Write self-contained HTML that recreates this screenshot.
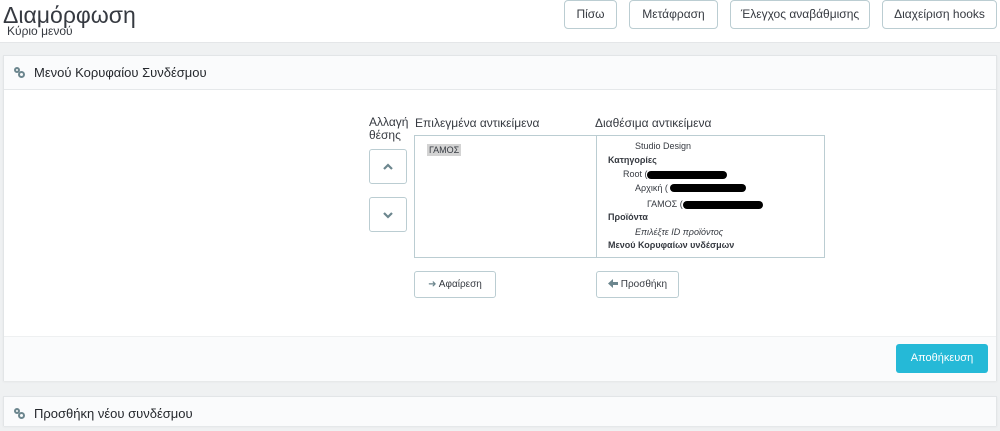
<!DOCTYPE html>
<html><head><meta charset="utf-8"><style>
*{box-sizing:border-box;margin:0;padding:0}
body{width:1000px;height:414px;overflow:hidden;background:#eff1f2;font-family:"Liberation Sans","DejaVu Sans",sans-serif;color:#363a41;position:relative}
.hdr{position:absolute;left:0;top:0;width:1000px;height:43px;background:#fff;border-bottom:1px solid #e4e6e8}
.t{position:absolute;left:3px;top:2px;font-size:23px;color:#363a41}
.st{position:absolute;left:7px;top:24px;font-size:12px;color:#363a41}
.b{position:absolute;top:0;height:29px;border:1px solid #bbcdd2;border-radius:4px;background:#fff;font-size:12px;color:#363a41;text-align:center;line-height:27px}
.panel{position:absolute;left:3px;width:994px;background:#fff;border:1px solid #e2e5e7;box-shadow:0 1px 2px rgba(0,0,0,.05)}
.ph{height:34px;background:#fafbfc;border-bottom:1px solid #e5e8ea;font-size:13px;line-height:34px;padding-left:30px;position:relative;color:#25282d}
.ico{position:absolute;left:10px;top:11px;width:6px;height:6px;border:2px solid #6c868e;border-radius:50%}
.ico2{position:absolute;left:14px;top:15px;width:7px;height:7px;border:2px solid #6c868e;border-radius:50%}
.lbl{position:absolute;font-size:12px;color:#363a41}
.box{position:absolute;border:1px solid #bbcdd2;background:#fff}
.sb{position:absolute;border:1px solid #bbcdd2;border-radius:3px;background:#fff;font-size:10px;text-align:center;color:#6c868e}
.sb svg{position:absolute;left:13px;top:13px}
.it{position:absolute;font-size:9px;color:#363a41;white-space:nowrap}
.bl{font-weight:bold}
.red{position:absolute;height:8px;background:#000;border-radius:4px}
</style></head><body>
<div class="hdr">
<div class="t">Διαμόρφωση</div>
<div class="st">Κύριο μενού</div>
<div class="b" style="left:564px;width:53px">Πίσω</div>
<div class="b" style="left:629px;width:89px">Μετάφραση</div>
<div class="b" style="left:730px;width:140px">Έλεγχος αναβάθμισης</div>
<div class="b" style="left:882px;width:115px">Διαχείριση hooks</div>
</div>
<div class="panel" style="top:55px;height:326px">
<div class="ph"><span class="ico"></span><span class="ico2"></span>Μενού Κορυφαίου Συνδέσμου</div>
<div style="position:absolute;left:0;top:280px;width:992px;height:45px;background:#fafbfc;border-top:1px solid #eef0f1"></div>
<div style="position:absolute;left:892px;top:288px;width:92px;height:29px;background:#25b9d7;border-radius:3px;color:#fff;font-size:11px;text-align:center;line-height:29px">Αποθήκευση</div>
</div>
<div class="lbl" style="left:369px;top:116px;line-height:13px">Αλλαγή<br>θέσης</div>
<div class="lbl" style="left:415px;top:116px">Επιλεγμένα αντικείμενα</div>
<div class="lbl" style="left:595px;top:116px">Διαθέσιμα αντικείμενα</div>
<div class="sb" style="left:369px;top:149px;width:38px;height:35px"><svg width="10" height="8" viewBox="0 0 10 8"><path d="M1 6 L5 2 L9 6" stroke="#6c868e" stroke-width="2.2" fill="none"/></svg></div>
<div class="sb" style="left:369px;top:197px;width:38px;height:35px"><svg width="10" height="8" viewBox="0 0 10 8"><path d="M1 2 L5 6 L9 2" stroke="#6c868e" stroke-width="2.2" fill="none"/></svg></div>
<div class="box" style="left:414px;top:135px;width:183px;height:123px"></div>
<div class="box" style="left:596px;top:135px;width:229px;height:123px"></div>
<div class="it" style="left:427px;top:144px;background:#d3d3d3;padding:1px 2px">ΓΑΜΟΣ</div>
<div class="it" style="left:635px;top:141px">Studio Design</div>
<div class="it bl" style="left:608px;top:155px">Κατηγορίες</div>
<div class="it" style="left:623px;top:169px">Root (</div><div class="red" style="left:647px;top:171px;width:80px"></div>
<div class="it" style="left:635px;top:183px">Αρχική (</div><div class="red" style="left:670px;top:184px;width:76px"></div>
<div class="it" style="left:647px;top:199px">ΓΑΜΟΣ (</div><div class="red" style="left:683px;top:201px;width:80px"></div>
<div class="it bl" style="left:608px;top:212px">Προϊόντα</div>
<div class="it" style="left:635px;top:227px;font-style:italic">Επιλέξτε ID προϊόντος</div>
<div class="it bl" style="left:608px;top:240px">Μενού Κορυφαίων υνδέσμων</div>
<div class="sb" style="left:414px;top:271px;width:82px;height:27px;line-height:25px;color:#363a41"><span style="color:#6c868e">&#10140;</span> Αφαίρεση</div>
<div class="sb" style="left:596px;top:271px;width:83px;height:27px;line-height:25px;color:#363a41"><svg style="position:static;vertical-align:-1px" width="10" height="9" viewBox="0 0 10 9"><path d="M5 0 L0 4.5 L5 9 L5 6 L10 6 L10 3 L5 3 Z" fill="#6c868e"/></svg> Προσθήκη</div>
<div class="panel" style="top:396px;height:30px">
<div class="ph" style="height:30px;line-height:34px"><span class="ico"></span><span class="ico2"></span>Προσθήκη νέου συνδέσμου</div>
</div>
</body></html>
